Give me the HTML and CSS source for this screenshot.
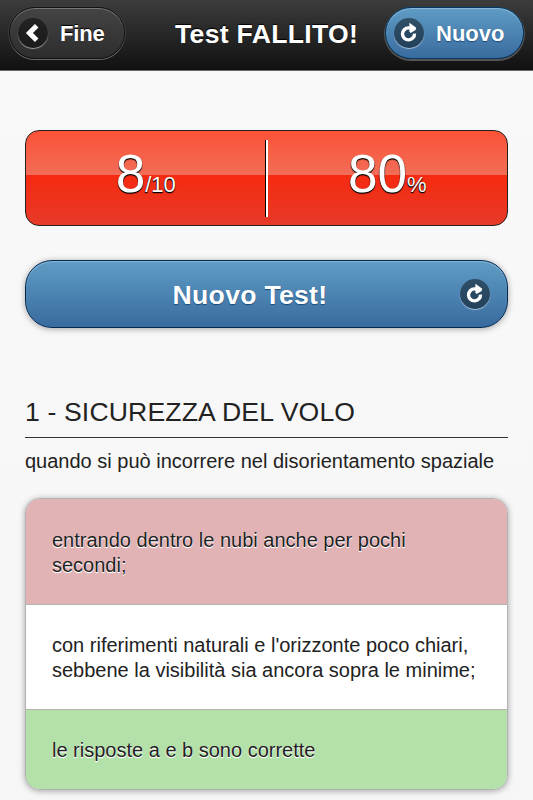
FILE: index.html
```html
<!DOCTYPE html>
<html lang="it">
<head>
    <meta charset="UTF-8">
    <meta name="viewport" content="width=device-width, initial-scale=1.0">
    <title>Test FALLITO!</title>
    <link rel="stylesheet" href="styles.css">
</head>
<body>
    <header class="header">
        <button class="btn btn-back">
            <span class="icon">
                <svg viewBox="0 0 30 30"><path d="M18.7 7.7 L11.4 15 L18.7 22.3" stroke-width="5"/></svg>
            </span>
            <span class="btn-label">Fine</span>
        </button>
        <h1 class="title">Test FALLITO!</h1>
        <button class="btn btn-blue btn-new">
            <span class="icon">
                <svg viewBox="0 0 30 30"><path d="M16.5 9.9 H14.5 A6 6 0 1 0 20.5 15.6" stroke-width="3.4"/><path class="arrow" d="M15.4 4.7 L22.2 9.8 L21.6 12 L16.6 15 L15.4 13.6 Z"/></svg>
            </span>
            <span class="btn-label">Nuovo</span>
        </button>
    </header>

    <main class="content">
        <section class="score">
            <div class="score-col"><span class="score-value">8</span><span class="score-unit">/10</span></div>
            <div class="score-col"><span class="score-value">80</span><span class="score-unit">%</span></div>
        </section>

        <button class="btn btn-blue btn-large">
            <span class="btn-label">Nuovo Test!</span>
            <span class="icon">
                <svg viewBox="0 0 30 30"><path d="M16.5 9.9 H14.5 A6 6 0 1 0 20.5 15.6" stroke-width="3.4"/><path class="arrow" d="M15.4 4.7 L22.2 9.8 L21.6 12 L16.6 15 L15.4 13.6 Z"/></svg>
            </span>
        </button>

        <h2 class="subject">1 - SICUREZZA DEL VOLO</h2>
        <p class="question">quando si può incorrere nel disorientamento spaziale</p>

        <ul class="answers">
            <li class="answer wrong">entrando dentro le nubi anche per pochi<br>secondi;</li>
            <li class="answer">con riferimenti naturali e l'orizzonte poco chiari,<br>sebbene la visibilità sia ancora sopra le minime;</li>
            <li class="answer right">le risposte a e b sono corrette</li>
        </ul>
    </main>
</body>
</html>
```
FILE: styles.css
```css
* {
    box-sizing: border-box;
    margin: 0;
    padding: 0;
    font-family: "Liberation Sans", Helvetica, Arial, sans-serif;
}

body {
    height: 800px;
    overflow: hidden;
    background: linear-gradient(#f9f9f9, #f6f6f6);
    color: #222;
}

.header {
    display: grid;
    grid-template-columns: 116px 1fr 139px;
    align-items: start;
    height: 71px;
    padding: 7px 9px 0 9px;
    background: linear-gradient(#3c3c3c, #111);
    border-bottom: 1px solid #6b6464;
}

.title {
    padding-left: 50px;
    font-size: 26.6px;
    letter-spacing: 0.3px;
    line-height: 54px;
    white-space: nowrap;
    color: #fff;
    text-shadow: 0 -1px 1px #000;
}

.btn {
    display: flex;
    align-items: center;
    height: 52px;
    border: 1px solid #111;
    border-radius: 26px;
    color: #fff;
    font-size: 22px;
    font-weight: bold;
}

.btn-back {
    padding-left: 8px;
    gap: 12px;
    background: linear-gradient(#444, #2d2d2d);
    box-shadow: 0 1px 0 #666, 0 0 0 1px #3c3c3c, inset 0 1px 0 #777;
    text-shadow: 0 -1px 1px #000;
}

.btn-back .btn-label {
    padding-top: 1px;
    letter-spacing: -0.2px;
}

.btn-blue {
    border-color: #043763;
    background: linear-gradient(#5f9cc5, #396b9e);
    box-shadow: 0 1px 0 1px #555, inset 0 1px 1px #8bbbdc;
    text-shadow: 0 1px 1px #194b7e;
}

.btn-new {
    padding-left: 8px;
    gap: 12px;
}

.btn-new .btn-label {
    padding-top: 1px;
}

.icon {
    width: 30px;
    height: 30px;
    border-radius: 50%;
    background: rgba(0, 0, 0, 0.45);
    box-shadow: 0 1px 1px rgba(255, 255, 255, 0.55);
}

.icon svg {
    display: block;
    fill: none;
    stroke: #fff;
}

.icon .arrow {
    fill: #fff;
    stroke: none;
}

.content {
    padding: 59px 25px 0;
}

.score {
    display: flex;
    height: 96px;
    padding: 9px 0 8px;
    border: 1px solid #222;
    border-radius: 14px;
    background: linear-gradient(#fb5236 0%, #f26d58 46.5%, #f62a10 46.5%, #e63a28 100%);
}

.score-col {
    flex: 1;
    color: #fff;
    line-height: 67px;
    text-align: center;
    text-shadow: 0 1px 1px #000, 0 1px 1px #000;
}

.score-col + .score-col {
    border-left: 2px solid #fff;
    box-shadow: -1px 0 0 #000;
}

.score-value {
    font-size: 53.2px;
}

.score-unit {
    font-size: 22px;
}

.btn-large {
    width: 100%;
    height: 68px;
    margin-top: 34px;
    padding: 0 17px;
    border-radius: 27px;
    border-color: #002850;
    font-size: 26.6px;
    box-shadow: 0 1px 6px rgba(0, 0, 0, 0.35), inset 0 1px 1px #8bbbdc;
}

.btn-large .btn-label {
    flex: 1;
    padding: 2px 3px 0 0;
    letter-spacing: 0.28px;
}

.subject {
    height: 43px;
    margin-top: 67px;
    border-bottom: 1px solid #333;
    font-size: 26.6px;
    font-weight: normal;
    letter-spacing: 0.14px;
    line-height: 34px;
    white-space: nowrap;
}

.question {
    margin-top: 11px;
    font-size: 20px;
    line-height: 25px;
    white-space: nowrap;
}

.answers {
    margin-top: 24px;
    overflow: hidden;
    list-style: none;
    border: 1px solid #b3b3b3;
    border-radius: 15px;
    background: #fff;
    box-shadow: 0 1px 6px rgba(0, 0, 0, 0.35);
}

.answer {
    padding: 28px 26px 26px;
    font-size: 20px;
    line-height: 25px;
    white-space: nowrap;
    text-shadow: 0 1px 1px #fff, 0 1px 0 #fff;
}

.answer:first-child {
    padding-top: 29px;
}

.answer + .answer {
    border-top: 1px solid #b3b3b3;
}

.wrong {
    background: #e2b3b5;
}

.right {
    background: #b3e1a9;
}
```
